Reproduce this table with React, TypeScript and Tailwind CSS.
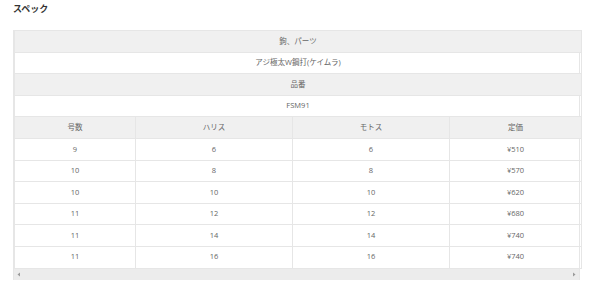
const spec: [string, string, string, string][] = [
  ["9", "6", "6", "¥510"],
  ["10", "8", "8", "¥570"],
  ["10", "10", "10", "¥620"],
  ["11", "12", "12", "¥680"],
  ["11", "14", "14", "¥740"],
  ["11", "16", "16", "¥740"],
];

const cell = "h-[21.6px] border border-[#e6e6e6] p-0 text-center align-middle";

export default function App() {
  return (
    <div className="w-[600px] h-[298px] overflow-hidden bg-white pl-[13px] pr-[20px] pt-[2px] font-['Open_Sans','Noto_Sans_CJK_JP',sans-serif] text-[#666]">
      <h2 className="text-[9px] font-bold leading-[14px] text-[#333]">スペック</h2>
      <div className="mt-[14px] border-x border-[#e6e6e6]">
        <table className="w-full table-fixed border-collapse text-[7.5px] leading-none">
          <colgroup>
            <col className="w-[121px]" />
            <col className="w-[157px]" />
            <col className="w-[157px]" />
            <col className="w-[132px]" />
          </colgroup>
          <tbody>
            <tr className="bg-[#f0f0f0]">
              <td colSpan={4} className={cell}>鉤、パーツ</td>
            </tr>
            <tr>
              <td colSpan={4} className={cell}>アジ極太W鋼打(ケイムラ)</td>
            </tr>
            <tr className="bg-[#f0f0f0]">
              <td colSpan={4} className={cell}>品番</td>
            </tr>
            <tr>
              <td colSpan={4} className={cell}>FSM91</td>
            </tr>
            <tr className="bg-[#f0f0f0]">
              <td className={cell}>号数</td>
              <td className={cell}>ハリス</td>
              <td className={cell}>モトス</td>
              <td className={cell}>定価</td>
            </tr>
            {spec.map((row, i) => (
              <tr key={i}>
                {row.map((v, j) => (
                  <td key={j} className={cell}>{v}</td>
                ))}
              </tr>
            ))}
          </tbody>
        </table>
        <div className="flex h-[11px] items-center justify-between bg-[#ececec] px-[3px]">
          <svg width="4" height="5" viewBox="0 0 4 5">
            <path d="M3 0.5 L0.5 2.5 L3 4.5 Z" fill="#9a9a9a" />
          </svg>
          <svg width="4" height="5" viewBox="0 0 4 5">
            <path d="M1 0.5 L3.5 2.5 L1 4.5 Z" fill="#9a9a9a" />
          </svg>
        </div>
      </div>
    </div>
  );
}
